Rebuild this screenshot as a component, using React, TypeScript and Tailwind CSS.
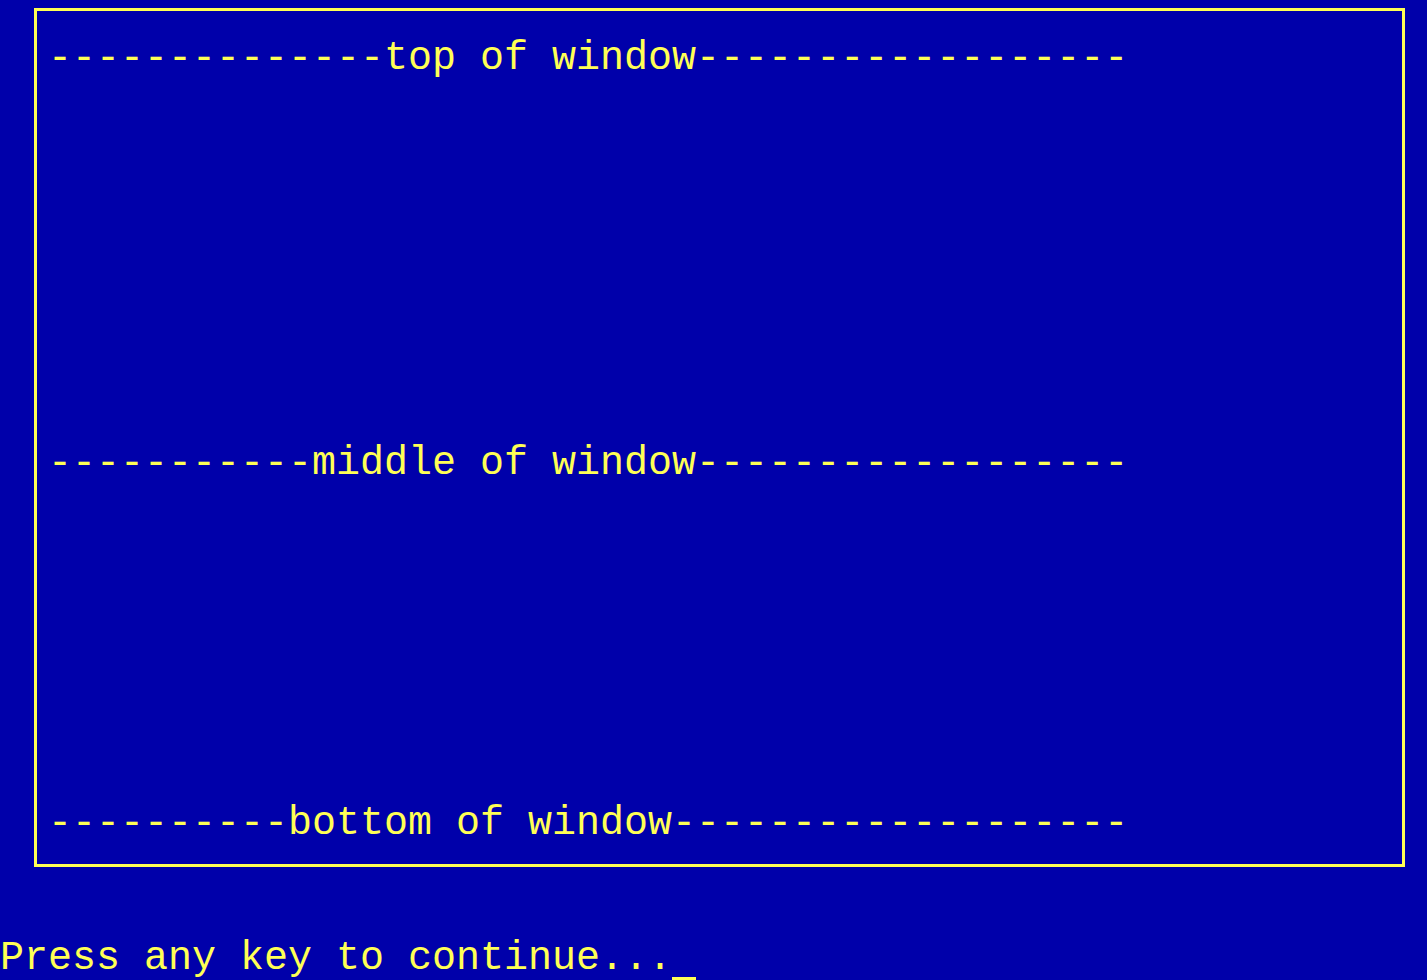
import React from "react";

const mono = { fontFamily: '"Liberation Mono", "DejaVu Sans Mono", monospace' };

export default function App() {
  const top = "-".repeat(14) + "top of window" + "-".repeat(18);
  const mid = "-".repeat(11) + "middle of window" + "-".repeat(18);
  const bot = "-".repeat(10) + "bottom of window" + "-".repeat(19);
  return (
    <div
      className="w-[1427px] h-[980px] overflow-hidden bg-[#0000aa] text-[#ffff55] text-[40px] leading-[45px] whitespace-pre"
      style={mono}
    >
      <div className="ml-[34px] mt-[8px] w-[1371px] h-[859px] border-[3px] border-[#ffff55] pl-[11px] pt-[25px] flex flex-col">
        <div className="h-[45px]">{top}</div>
        <div className="h-[360px]" />
        <div className="h-[45px]">{mid}</div>
        <div className="h-[315px]" />
        <div className="h-[45px]">{bot}</div>
      </div>
      <div className="mt-[69px] h-[45px] flex items-start">
        <span>Press any key to continue...</span>
        <span className="w-[24px] h-[44px] flex items-end">
          <span className="block w-[24px] h-[3px] bg-[#ffff55]" />
        </span>
      </div>
    </div>
  );
}
